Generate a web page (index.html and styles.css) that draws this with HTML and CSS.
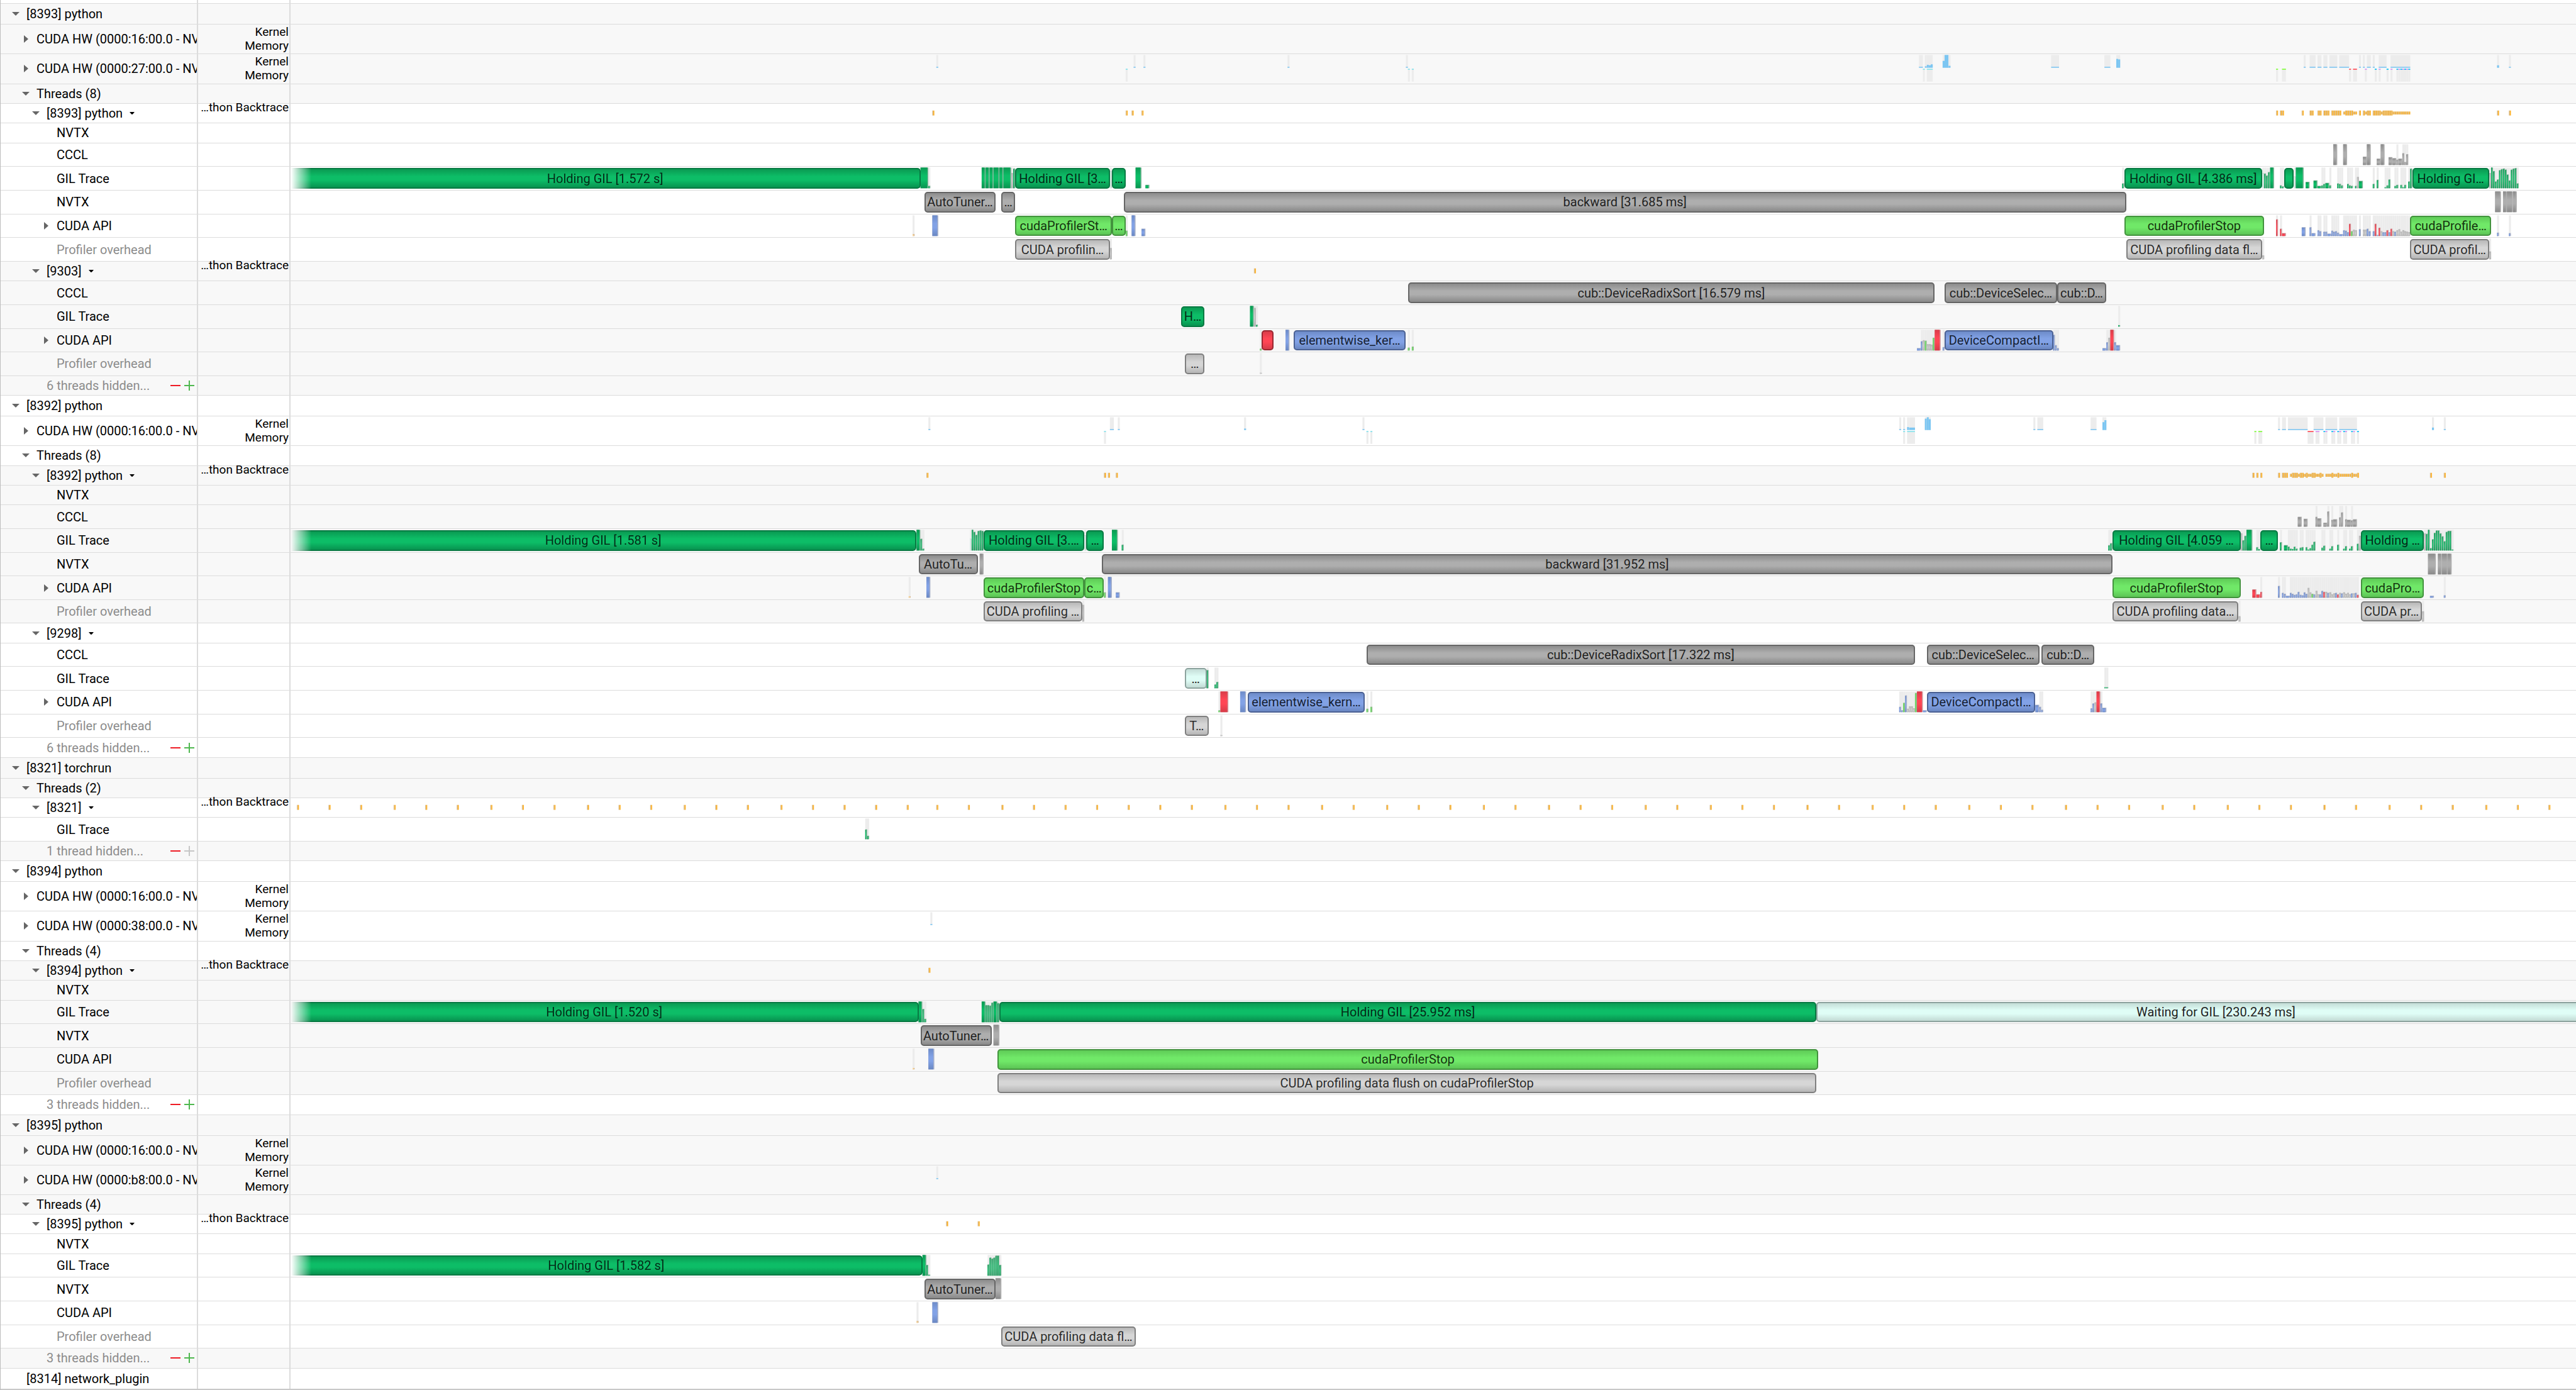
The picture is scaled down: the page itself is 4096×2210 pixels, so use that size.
FILE: index.html
```html
<!DOCTYPE html>
<html lang="en">
<head>
<meta charset="utf-8">
<title>Timeline</title>
<link rel="stylesheet" href="styles.css">
</head>
<body>
<svg class="defs" width="0" height="0" aria-hidden="true">
  <defs>
    <linearGradient id="fill-g" x2="0" y2="1"><stop offset="0" stop-color="#0a9a52"/><stop offset=".4" stop-color="#0dbd67"/><stop offset=".6" stop-color="#0dbd67"/><stop offset="1" stop-color="#089350"/></linearGradient>
    <linearGradient id="fill-k" x2="0" y2="1"><stop offset="0" stop-color="#8c8c8c"/><stop offset=".4" stop-color="#aeaeae"/><stop offset=".6" stop-color="#aeaeae"/><stop offset="1" stop-color="#898989"/></linearGradient>
    <linearGradient id="fill-l" x2="0" y2="1"><stop offset="0" stop-color="#bababa"/><stop offset=".5" stop-color="#d2d2d2"/><stop offset="1" stop-color="#b4b4b4"/></linearGradient>
    <linearGradient id="fill-b" x2="0" y2="1"><stop offset="0" stop-color="#6d8bc8"/><stop offset=".4" stop-color="#82a2e6"/><stop offset=".6" stop-color="#82a2e6"/><stop offset="1" stop-color="#6a87c2"/></linearGradient>
    <linearGradient id="fill-r" x2="0" y2="1"><stop offset="0" stop-color="#d93c49"/><stop offset=".4" stop-color="#ff4655"/><stop offset=".6" stop-color="#ff4655"/><stop offset="1" stop-color="#d63b48"/></linearGradient>
    <symbol id="open" viewBox="0 0 12 12"><path d="M0 3h12L6 9z"/></symbol>
    <symbol id="closed" viewBox="0 0 12 12"><path d="M3 0v12l7-6z"/></symbol>
    <symbol id="caret" viewBox="0 0 8 4"><path d="M0 0h8L5 3.5Q4 4.4 3 3.5z"/></symbol>
    <symbol id="minus" viewBox="0 0 16 16"><path d="M0 7h16v2H0z"/></symbol>
    <symbol id="plus" viewBox="0 0 16 16"><path d="M0 7h7V0h2v7h7v2H9v7H7V9H0z"/></symbol>
  </defs>
</svg>
<main class="timeline">
  <div class="spacer"></div>

  <div class="row head shade"><div class="name l0"><button class="toggle" aria-label="Collapse"><svg><use href="#open"/></svg></button>[8393] python</div><div class="axis"></div><div class="lane"></div></div>
  <div class="row hw shade"><div class="name l1"><button class="toggle" aria-label="Expand"><svg><use href="#closed"/></svg></button>CUDA HW (0000:16:00.0 - NVIDIA</div><div class="axis"><span>Kernel</span><span>Memory</span></div><div class="lane"></div></div>
  <div class="row hw shade"><div class="name l1"><button class="toggle" aria-label="Expand"><svg><use href="#closed"/></svg></button>CUDA HW (0000:27:00.0 - NVIDIA</div><div class="axis"><span>Kernel</span><span>Memory</span></div><div class="lane" data-lane="8393-hw"></div></div>
  <div class="row slim shade"><div class="name l1"><button class="toggle" aria-label="Collapse"><svg><use href="#open"/></svg></button>Threads (8)</div><div class="axis"></div><div class="lane"></div></div>
  <div class="row slim"><div class="name l2"><button class="toggle" aria-label="Collapse"><svg><use href="#open"/></svg></button>[8393] python<button class="menu" aria-label="Thread menu"><svg><use href="#caret"/></svg></button></div><div class="axis raised"><span>…thon Backtrace</span></div><div class="lane" data-lane="8393-marks"></div></div>
  <div class="row slim"><div class="name l3">NVTX</div><div class="axis"></div><div class="lane"></div></div>
  <div class="row"><div class="name l3">CCCL</div><div class="axis"></div><div class="lane" data-lane="8393-cccl"></div></div>
  <div class="row"><div class="name l3">GIL Trace</div><div class="axis"></div><div class="lane" data-lane="8393-gil"></div></div>
  <div class="row"><div class="name l3">NVTX</div><div class="axis"></div><div class="lane" data-lane="8393-nvtx"></div></div>
  <div class="row"><div class="name l3"><button class="toggle" aria-label="Expand"><svg><use href="#closed"/></svg></button>CUDA API</div><div class="axis"></div><div class="lane" data-lane="8393-api"></div></div>
  <div class="row"><div class="name l3 dim">Profiler overhead</div><div class="axis"></div><div class="lane" data-lane="8393-prof"></div></div>
  <div class="row slim shade"><div class="name l2"><button class="toggle" aria-label="Collapse"><svg><use href="#open"/></svg></button>[9303]<button class="menu" aria-label="Thread menu"><svg><use href="#caret"/></svg></button></div><div class="axis raised"><span>…thon Backtrace</span></div><div class="lane" data-lane="9303-marks"></div></div>
  <div class="row shade"><div class="name l3">CCCL</div><div class="axis"></div><div class="lane" data-lane="9303-cccl"></div></div>
  <div class="row shade"><div class="name l3">GIL Trace</div><div class="axis"></div><div class="lane" data-lane="9303-gil"></div></div>
  <div class="row shade"><div class="name l3"><button class="toggle" aria-label="Expand"><svg><use href="#closed"/></svg></button>CUDA API</div><div class="axis"></div><div class="lane" data-lane="9303-api"></div></div>
  <div class="row shade"><div class="name l3 dim">Profiler overhead</div><div class="axis"></div><div class="lane" data-lane="9303-prof"></div></div>
  <div class="row slim shade"><div class="name l2 dim">6 threads hidden...<span class="counts"><button class="less" aria-label="Show fewer"><svg><use href="#minus"/></svg></button><button class="more" aria-label="Show more"><svg><use href="#plus"/></svg></button></span></div><div class="axis"></div><div class="lane"></div></div>

  <div class="row head"><div class="name l0"><button class="toggle" aria-label="Collapse"><svg><use href="#open"/></svg></button>[8392] python</div><div class="axis"></div><div class="lane"></div></div>
  <div class="row hw"><div class="name l1"><button class="toggle" aria-label="Expand"><svg><use href="#closed"/></svg></button>CUDA HW (0000:16:00.0 - NVIDIA</div><div class="axis"><span>Kernel</span><span>Memory</span></div><div class="lane" data-lane="8392-hw"></div></div>
  <div class="row slim"><div class="name l1"><button class="toggle" aria-label="Collapse"><svg><use href="#open"/></svg></button>Threads (8)</div><div class="axis"></div><div class="lane"></div></div>
  <div class="row slim shade"><div class="name l2"><button class="toggle" aria-label="Collapse"><svg><use href="#open"/></svg></button>[8392] python<button class="menu" aria-label="Thread menu"><svg><use href="#caret"/></svg></button></div><div class="axis raised"><span>…thon Backtrace</span></div><div class="lane" data-lane="8392-marks"></div></div>
  <div class="row slim shade"><div class="name l3">NVTX</div><div class="axis"></div><div class="lane"></div></div>
  <div class="row shade"><div class="name l3">CCCL</div><div class="axis"></div><div class="lane" data-lane="8392-cccl"></div></div>
  <div class="row shade"><div class="name l3">GIL Trace</div><div class="axis"></div><div class="lane" data-lane="8392-gil"></div></div>
  <div class="row shade"><div class="name l3">NVTX</div><div class="axis"></div><div class="lane" data-lane="8392-nvtx"></div></div>
  <div class="row shade"><div class="name l3"><button class="toggle" aria-label="Expand"><svg><use href="#closed"/></svg></button>CUDA API</div><div class="axis"></div><div class="lane" data-lane="8392-api"></div></div>
  <div class="row shade"><div class="name l3 dim">Profiler overhead</div><div class="axis"></div><div class="lane" data-lane="8392-prof"></div></div>
  <div class="row slim"><div class="name l2"><button class="toggle" aria-label="Collapse"><svg><use href="#open"/></svg></button>[9298]<button class="menu" aria-label="Thread menu"><svg><use href="#caret"/></svg></button></div><div class="axis"></div><div class="lane"></div></div>
  <div class="row"><div class="name l3">CCCL</div><div class="axis"></div><div class="lane" data-lane="9298-cccl"></div></div>
  <div class="row"><div class="name l3">GIL Trace</div><div class="axis"></div><div class="lane" data-lane="9298-gil"></div></div>
  <div class="row"><div class="name l3"><button class="toggle" aria-label="Expand"><svg><use href="#closed"/></svg></button>CUDA API</div><div class="axis"></div><div class="lane" data-lane="9298-api"></div></div>
  <div class="row"><div class="name l3 dim">Profiler overhead</div><div class="axis"></div><div class="lane" data-lane="9298-prof"></div></div>
  <div class="row slim"><div class="name l2 dim">6 threads hidden...<span class="counts"><button class="less" aria-label="Show fewer"><svg><use href="#minus"/></svg></button><button class="more" aria-label="Show more"><svg><use href="#plus"/></svg></button></span></div><div class="axis"></div><div class="lane"></div></div>

  <div class="row head shade"><div class="name l0"><button class="toggle" aria-label="Collapse"><svg><use href="#open"/></svg></button>[8321] torchrun</div><div class="axis"></div><div class="lane"></div></div>
  <div class="row slim shade"><div class="name l1"><button class="toggle" aria-label="Collapse"><svg><use href="#open"/></svg></button>Threads (2)</div><div class="axis"></div><div class="lane"></div></div>
  <div class="row slim"><div class="name l2"><button class="toggle" aria-label="Collapse"><svg><use href="#open"/></svg></button>[8321]<button class="menu" aria-label="Thread menu"><svg><use href="#caret"/></svg></button></div><div class="axis raised"><span>…thon Backtrace</span></div><div class="lane" data-lane="8321-marks"></div></div>
  <div class="row"><div class="name l3">GIL Trace</div><div class="axis"></div><div class="lane" data-lane="8321-gil"></div></div>
  <div class="row slim shade"><div class="name l2 dim">1 thread hidden...<span class="counts"><button class="less" aria-label="Show fewer"><svg><use href="#minus"/></svg></button><button class="more" aria-label="Show more" disabled><svg><use href="#plus"/></svg></button></span></div><div class="axis"></div><div class="lane"></div></div>

  <div class="row head"><div class="name l0"><button class="toggle" aria-label="Collapse"><svg><use href="#open"/></svg></button>[8394] python</div><div class="axis"></div><div class="lane"></div></div>
  <div class="row hw"><div class="name l1"><button class="toggle" aria-label="Expand"><svg><use href="#closed"/></svg></button>CUDA HW (0000:16:00.0 - NVIDIA</div><div class="axis"><span>Kernel</span><span>Memory</span></div><div class="lane"></div></div>
  <div class="row hw"><div class="name l1"><button class="toggle" aria-label="Expand"><svg><use href="#closed"/></svg></button>CUDA HW (0000:38:00.0 - NVIDIA</div><div class="axis"><span>Kernel</span><span>Memory</span></div><div class="lane" data-lane="8394-hw"></div></div>
  <div class="row slim"><div class="name l1"><button class="toggle" aria-label="Collapse"><svg><use href="#open"/></svg></button>Threads (4)</div><div class="axis"></div><div class="lane"></div></div>
  <div class="row slim shade"><div class="name l2"><button class="toggle" aria-label="Collapse"><svg><use href="#open"/></svg></button>[8394] python<button class="menu" aria-label="Thread menu"><svg><use href="#caret"/></svg></button></div><div class="axis raised"><span>…thon Backtrace</span></div><div class="lane" data-lane="8394-marks"></div></div>
  <div class="row slim shade"><div class="name l3">NVTX</div><div class="axis"></div><div class="lane"></div></div>
  <div class="row shade"><div class="name l3">GIL Trace</div><div class="axis"></div><div class="lane" data-lane="8394-gil"></div></div>
  <div class="row shade"><div class="name l3">NVTX</div><div class="axis"></div><div class="lane" data-lane="8394-nvtx"></div></div>
  <div class="row shade"><div class="name l3">CUDA API</div><div class="axis"></div><div class="lane" data-lane="8394-api"></div></div>
  <div class="row shade"><div class="name l3 dim">Profiler overhead</div><div class="axis"></div><div class="lane" data-lane="8394-prof"></div></div>
  <div class="row slim"><div class="name l2 dim">3 threads hidden...<span class="counts"><button class="less" aria-label="Show fewer"><svg><use href="#minus"/></svg></button><button class="more" aria-label="Show more"><svg><use href="#plus"/></svg></button></span></div><div class="axis"></div><div class="lane"></div></div>

  <div class="row head shade"><div class="name l0"><button class="toggle" aria-label="Collapse"><svg><use href="#open"/></svg></button>[8395] python</div><div class="axis"></div><div class="lane"></div></div>
  <div class="row hw shade"><div class="name l1"><button class="toggle" aria-label="Expand"><svg><use href="#closed"/></svg></button>CUDA HW (0000:16:00.0 - NVIDIA</div><div class="axis"><span>Kernel</span><span>Memory</span></div><div class="lane"></div></div>
  <div class="row hw shade"><div class="name l1"><button class="toggle" aria-label="Expand"><svg><use href="#closed"/></svg></button>CUDA HW (0000:b8:00.0 - NVIDIA</div><div class="axis"><span>Kernel</span><span>Memory</span></div><div class="lane" data-lane="8395-hw"></div></div>
  <div class="row slim shade"><div class="name l1"><button class="toggle" aria-label="Collapse"><svg><use href="#open"/></svg></button>Threads (4)</div><div class="axis"></div><div class="lane"></div></div>
  <div class="row slim"><div class="name l2"><button class="toggle" aria-label="Collapse"><svg><use href="#open"/></svg></button>[8395] python<button class="menu" aria-label="Thread menu"><svg><use href="#caret"/></svg></button></div><div class="axis raised"><span>…thon Backtrace</span></div><div class="lane" data-lane="8395-marks"></div></div>
  <div class="row slim"><div class="name l3">NVTX</div><div class="axis"></div><div class="lane"></div></div>
  <div class="row"><div class="name l3">GIL Trace</div><div class="axis"></div><div class="lane" data-lane="8395-gil"></div></div>
  <div class="row"><div class="name l3">NVTX</div><div class="axis"></div><div class="lane" data-lane="8395-nvtx"></div></div>
  <div class="row"><div class="name l3">CUDA API</div><div class="axis"></div><div class="lane" data-lane="8395-api"></div></div>
  <div class="row"><div class="name l3 dim">Profiler overhead</div><div class="axis"></div><div class="lane" data-lane="8395-prof"></div></div>
  <div class="row slim shade"><div class="name l2 dim">3 threads hidden...<span class="counts"><button class="less" aria-label="Show fewer"><svg><use href="#minus"/></svg></button><button class="more" aria-label="Show more"><svg><use href="#plus"/></svg></button></span></div><div class="axis"></div><div class="lane"></div></div>

  <div class="row head"><div class="name l0">[8314] network_plugin</div><div class="axis"></div><div class="lane"></div></div>
  <div class="edge"></div>
</main>
<script src="script.js"></script>
</body>
</html>
```
FILE: styles.css
```css
* { box-sizing: border-box; }

body {
  margin: 0;
  background: #fff;
  color: #000;
  font: 20px/24px Roboto, "Liberation Sans", sans-serif;
}

.defs { position: absolute; }

.timeline {
  display: flex;
  flex-direction: column;
  min-height: 100vh;
  border-left: 1px solid #bdbdbd;
  overflow: hidden;
}

/* Row heights share the window in proportion to these weights. */
.spacer,
.row {
  display: grid;
  grid-template-columns: 314px 147px minmax(0, 1fr);
  flex: 48 0 0px;
}
.spacer { flex-grow: 7; background: linear-gradient(to right, transparent 312px, #dcdcdc 312px 314px, transparent 314px 459px, #dcdcdc 459px 461px, transparent 461px); }
.row { box-shadow: inset 0 1px #dcdcdc; }
.row.head { flex-grow: 42; }
.row.hw { flex-grow: 60; }
.row.slim { flex-grow: 40; }
.row.shade { background: #f8f8f8; }
.edge { flex: 3 0 0px; background: #c8c8c8; }

.name {
  display: flex;
  align-items: center;
  padding-top: 1px;
  overflow: hidden;
  white-space: nowrap;
  border-right: 2px solid #dcdcdc;
}
.l0 { padding-left: 41px; }
.l1 { padding-left: 57px; }
.l2 { padding-left: 73px; }
.l3 { padding-left: 89px; }
.dim { color: #8c8c8c; }

.axis {
  display: flex;
  flex-direction: column;
  justify-content: center;
  align-items: flex-end;
  padding-top: 1px;
  padding-right: 1px;
  border-right: 2px solid #dcdcdc;
  font-size: 19px;
  line-height: 22px;
  white-space: nowrap;
}
.axis.raised { justify-content: flex-start; }
.axis.raised span { margin-top: -5px; }

button {
  display: flex;
  align-items: center;
  justify-content: center;
  flex: none;
  padding: 0;
  border: 0;
  background: none;
}
.toggle { width: 24px; height: 24px; margin-left: -29px; margin-right: 5px; }
.toggle svg { width: 12px; height: 12px; fill: #666; }
.menu { width: 24px; height: 24px; margin-left: 3px; }
.menu svg { width: 8px; height: 4px; fill: #000; }
.counts { display: flex; gap: 6px; margin-left: auto; margin-right: 4px; }
.counts svg { width: 16px; height: 16px; }
.less { color: #ee1c25; }
.more { color: #4fb84f; }
.more:disabled { color: #c6c6c6; }
.counts svg { fill: currentColor; }

/* Lanes: SVG for the sampled buckets, HTML bars for named ranges. */
.lane { position: relative; overflow: hidden; }
.lane svg { position: absolute; inset: 0; width: 100%; height: 100%; }

.bar {
  position: absolute;
  top: 3px;
  bottom: 2px;
  display: flex;
  align-items: center;
  justify-content: center;
  overflow: hidden;
  white-space: nowrap;
  border: 2px solid;
  border-radius: 5px;
}
.bar span { color: #222; }
.bar.green { background: linear-gradient(#0a9a52, #0dbd67 40%, #0dbd67 60%, #089350); border-color: #087a43; }
.bar.green span { color: #042a17; }
.bar.gray { background: linear-gradient(#8c8c8c, #aeaeae 40%, #aeaeae 60%, #898989); border-color: #666; }
.bar.light { background: linear-gradient(#b8b8b8, #d6d6d6 40%, #d6d6d6 60%, #b5b5b5); border-color: #7f7f7f; }
.bar.light span { color: #2c2c2c; }
.bar.lime { background: linear-gradient(#5fcb57, #70e868 40%, #70e868 60%, #5cc455); border-color: #43933e; }
.bar.lime span { color: #15350f; }
.bar.blue { background: linear-gradient(#6d8bc8, #82a2e6 40%, #82a2e6 60%, #6a87c2); border-color: #4c6294; }
.bar.blue span { color: #161f33; }
.bar.red { background: linear-gradient(#d93c49, #ff4655 40%, #ff4655 60%, #d63b48); border-color: #9a2731; }
.bar.mint { background: linear-gradient(#c4ddd7, #dffdf6 40%, #dffdf6 60%, #c2dad4); border-color: #8da39e; }
.bar.from-before {
  border-left: 0;
  border-top-left-radius: 0;
  border-bottom-left-radius: 0;
  -webkit-mask-image: linear-gradient(to right, transparent, #000 32px);
  mask-image: linear-gradient(to right, transparent, #000 32px);
}
```
FILE: script.js
```js
// Horizontal extent of a lane, in time units.
const START = 589;
const SPAN = 4633;

// Sampled buckets: "start:item item ..."; each item is a colour letter, a height
// and an optional "*n" for n buckets of 4 units.
// Named ranges: [from, to, colour, text].
const LANES = {
  '8393-hw': {
    kernel: '1898:2 2298:2 2318:2 2610:2 2850:2 3890:2*2 3902:3 6 5 7 3938:14 26*2 4 4158:2*4 4266:2*3 4290:18 17 4670:2 4682:2*3 4698:2*2 4710:2*2 4722:2*4 4742:2*5 4782:2 4790:2 4798:2*2 4810:2 4822:2*4 4846:2*10 5062:5 5086:2',
    memory: '2282:a 2854:a 2862:a 3898:a 3906:a*3 4614:g 4626:g*2 4762:r 4770:r*2 4794:v 4814:c 4822:v 4838:c 4846:v 4858:c v c v c v c'
  },
  '8393-marks': { marks: '1890:10 2282:10 2294:10 2314:10 4614:10 4622:10 10 4666:10 4682:10 10 4698:10 10 4710:10 10 10 4726:10 10 10 10 10 4750:6 10 10 10 10 6 6 4782:10 4790:10 6 10 10 4810:10 10 10 10 6 10 10 10 10 10 6 6 6 6 6 6 6 6 6 5062:10 5086:10' },
  '8393-cccl': { chart: '4730:k42*2 4750:k42*2 4790:k17*2 k42*2 4818:k13*2 k42*2 4842:k16*2 k14*2 k11 k13*2 k24 k6 k22' },
  '8393-gil': {
    chart: '1866:g42*4 g5 1990:g42*2 g42*2 g42*2 g42*3 g42*2 g42*4 l31 g40 2250:m35 2302:g42*3 2322:g7*2 4302:g10 4586:m31 g30 g26 g33 g42*2 4622:g6 g4 4650:m24 g42*4 4674:g13*2 4690:g16*2 g5*2 g6 g9 g11*2 g6 4738:g10 g9 g6 4758:g9 g6 g5 4774:g5 l23 g15*2 4810:g9 4818:g17 4834:g2 g6 g18 4854:g5 g7 4866:g7 g2 g7 4882:g14 g40 5046:l31 g42 g35 g14 g18 g37 g39 g40 g38 g28 g16 g38 g40 g41 g10',
    bars: [[590, 1866, 'green from-before', 'Holding GIL [1.572 s]'], [2058, 2250, 'green', 'Holding GIL [3…'], [2254, 2282, 'green', '…'], [4306, 4586, 'green', 'Holding GIL [4.386 ms]'], [4630, 4650, 'green', ''], [4890, 5046, 'green', 'Holding GI…']]
  },
  '8393-nvtx': {
    chart: '5058:k42*3 5074:k42*2 k42*3 k42*2',
    bars: [[1874, 2018, 'gray', 'AutoTuner…'], [2030, 2058, 'gray', '…'], [2278, 4310, 'gray', 'backward [31.685 ms]']]
  },
  '8393-api': {
    chart: '1850:o4 1890:b42*3 2282:G11 2294:b42*2 2314:b15*2 4614:r34 4622:r15 r6*2 4666:b18*2 4682:b18 b6*2 4698:b12 b10 4710:b9 b9 b5*2 4726:b11 b9 b10 b7 b4*2 4750:b12 b11 b8 r25 G10 l13 l12 4782:b14 4790:l13 l13 b15 b10 4810:b10 r25 b2 r17 l10 b8 b8 r12 b8 r15 l10 b9 l12 l14 l9 l12 l10 l9 l8 5062:b7 5086:b6',
    bars: [[2058, 2254, 'lime', 'cudaProfilerSt…'], [2254, 2282, 'lime', '…'], [4306, 4590, 'lime', 'cudaProfilerStop'], [4886, 5050, 'lime', 'cudaProfile…']]
  },
  '8393-prof': {
    chart: '2250:l23 4586:l8 5046:l16',
    bars: [[2058, 2250, 'light', 'CUDA profilin…'], [4310, 4586, 'light', 'CUDA profiling data fl…'], [4886, 5046, 'light', 'CUDA profil…']]
  },
  '9303-marks': { marks: '2542:10' },
  '9303-cccl': { bars: [[2854, 3922, 'gray', 'cub::DeviceRadixSort [16.579 ms]'], [3942, 4170, 'gray', 'cub::DeviceSelec…'], [4170, 4270, 'gray', 'cub::D…']] },
  '9303-gil': { chart: '2534:g42*2 l38 g4 4294:g3', bars: [[2394, 2442, 'green', 'H…']] },
  '9303-api': {
    chart: '2554:G4 2606:b42*2 2854:G6 2862:G8 3886:b5*2 b19 l21 G20 l13 l13 l12 G26 r42*3 3938:b7 4162:b32 b11 b5 4262:b5*2 b17 l26 r42*2 b17 b11*2',
    bars: [[2558, 2582, 'red', ''], [2622, 2850, 'blue', 'elementwise_ker…'], [3942, 4162, 'blue', 'DeviceCompactI…']]
  },
  '9303-prof': { chart: '2554:l2', bars: [[2402, 2442, 'light', '…']] },

  '8392-hw': {
    kernel: '1882:2 2250:2*2 2266:2 2522:3 2762:2 3850:2 3858:2 3866:6 5*3 3902:23 26 22 4122:2 4130:2*3 4238:2*3 4262:16 20 4618:2 4626:2*2 4638:2*10 4690:2*5 4714:2*6 4742:2*9 4930:5 4954:2',
    memory: '2238:a 2770:a 2778:a 3858:a 3866:a*4 4570:g 4578:g*2 4678:r*3 4694:v*2 4710:c v 4726:c v 4738:c v 4750:c v 4766:c v 4778:c'
  },
  '8392-marks': { marks: '1878:10 2238:10 2246:10 2262:10 4566:10 4574:10 4582:10 4618:10 4626:10 10 10 4642:6 10 10 10 6 10 10 6 10 6 6 10 10 6 6 10 6 4714:6 6 6 10 6 6 10 6 6 6 6 6 6 10 6 6 10 4926:10 4954:10' },
  '8392-cccl': { chart: '4658:k20*2 4670:k16*2 4694:k20 k17*2 4710:k8*2 k31 4726:k14 k15*2 4742:k19 k29 4754:k15 k14*2 k13 k15*2' },
  '8392-gil': {
    chart: '1858:g42*2 g24 g4 1966:m24 g42 g38 g32 g40 g41 g40 2198:m31 2254:g42*3 2274:g12 4274:g11 g15 4542:l35 g21 g30 g42*3 4574:g7 g3 4622:g17 4630:g11*2 g8 g4 g3 g8 g4 4662:g6 g7 4674:g7 g2 g5 g12 g18 4706:g6 g10 4722:g4 g9 4738:g12 4750:g4 g9 4762:g4 g9 4778:g14 l30 4914:l35 g34 g42 g5 g23 g36 g41 g41 g35 g29 g19 g38 g40 g40 g2',
    bars: [[590, 1858, 'green from-before', 'Holding GIL [1.581 s]'], [1994, 2198, 'green', 'Holding GIL [3.…'], [2202, 2238, 'green', '…'], [4282, 4542, 'green', 'Holding GIL [4.059 …'], [4582, 4618, 'green', '…'], [4786, 4914, 'green', 'Holding …']]
  },
  '8392-nvtx': {
    chart: '1986:k42*2 4922:k42*4 4942:k42*2 k42*3 k42*2',
    bars: [[1862, 1982, 'gray', 'AutoTu…'], [2234, 4282, 'gray', 'backward [31.952 ms]']]
  },
  '8392-api': {
    chart: '1842:o3 1878:b42*2 2238:G11 2246:b42*2 2262:b11*2 4566:r17*2 r7*2 r12 4618:b24 4626:b10 b8 b4*2 b10 b8 b6 b7 b12 b6 b5 b11 b8 l20 l11 G8 b7 l14 l7 b7 b14 r12 l12 b10 l11 l7 l9 b10 r7 l10 b9 l11 l8 l10 l7 b9 l9 b10 r6 4926:b4*2 4954:b5',
    bars: [[1994, 2198, 'lime', 'cudaProfilerStop'], [2198, 2238, 'lime', 'c…'], [4282, 4542, 'lime', 'cudaProfilerStop'], [4786, 4914, 'lime', 'cudaPro…']]
  },
  '8392-prof': {
    chart: '2194:l34 4538:l11 4910:l21',
    bars: [[1994, 2194, 'light', 'CUDA profiling …'], [4282, 4538, 'light', 'CUDA profiling data…'], [4786, 4910, 'light', 'CUDA pr…']]
  },
  '9298-cccl': { bars: [[2770, 3882, 'gray', 'cub::DeviceRadixSort [17.322 ms]'], [3906, 4134, 'gray', 'cub::DeviceSelec…'], [4138, 4246, 'gray', 'cub::D…']] },
  '9298-gil': { chart: '2446:g37 2462:g8 g13 4266:g2 g2', bars: [[2402, 2446, 'mint', '…']] },
  '9298-api': {
    chart: '2470:G4 r42*4 2514:b42*3 2770:G7 2778:G11 3850:b11 b4 G19 b34 l7 l12 l12 l8 G39 r42*3 b4*2 4126:b15*2 b11 b5 4238:b8 b18 l20 r42*2 b18 b9*2',
    bars: [[2530, 2766, 'blue', 'elementwise_kern…'], [3906, 4126, 'blue', 'DeviceCompactI…']]
  },
  '9298-prof': { chart: '2474:l2', bars: [[2402, 2450, 'light', 'T…']] },

  '8321-marks': { marks: '602:10 666:10 730:10 798:10 862:10 926:10 994:10 1058:10 1122:10 1190:10 1254:10 1318:10 1386:10 1450:10 1514:10 1582:10 1646:10 1710:10 1774:10 1838:10 1898:10 1962:10 2030:10 2094:10 2158:10 2222:10 2286:10 2350:10 2414:10 2482:10 2546:10 2610:10 2678:10 2742:10 2810:10 2874:10 2938:10 3006:10 3070:10 3138:10 3202:10 3266:10 3334:10 3398:10 3466:10 3530:10 3594:10 3662:10 3726:10 3794:10 3858:10 3922:10 3990:10 4054:10 4118:10 4186:10 4250:10 4314:10 4382:10 4446:10 4514:10 4578:10 4642:10 4710:10 4774:10 4842:10 4906:10 4970:10 5038:10 5102:10 5166:10' },
  '8321-gil': { chart: '1754:g20 g7' },

  '8394-hw': { kernel: '1886:2' },
  '8394-marks': { marks: '1882:10' },
  '8394-gil': {
    chart: '1862:g42*2 g27 g7 1990:g42*2 g35 g35 g34 g40 g42*2 g39',
    bars: [[590, 1862, 'green from-before', 'Holding GIL [1.520 s]'], [2026, 3682, 'green', 'Holding GIL [25.952 ms]'], [3682, 5302, 'mint', 'Waiting for GIL [230.243 ms]']]
  },
  '8394-nvtx': { chart: '2014:k42*3', bars: [[1866, 2010, 'gray', 'AutoTuner…']] },
  '8394-api': { chart: '1850:o3 1882:b42*3', bars: [[2022, 3686, 'lime', 'cudaProfilerStop']] },
  '8394-prof': { bars: [[2022, 3682, 'light', 'CUDA profiling data flush on cudaProfilerStop']] },

  '8395-hw': { kernel: '1898:2' },
  '8395-marks': { marks: '1918:10 1982:10' },
  '8395-gil': {
    chart: '1870:g42*2 g22 g2 2002:g23 g37 g35 g37 g41 g41 g22',
    bars: [[590, 1870, 'green from-before', 'Holding GIL [1.582 s]']]
  },
  '8395-nvtx': { chart: '2018:k42*3', bars: [[1874, 2018, 'gray', 'AutoTuner…']] },
  '8395-api': { chart: '1858:o4 1890:b42*3' },
  '8395-prof': { bars: [[2030, 2302, 'light', 'CUDA profiling data fl…']] }
};

const FILL = { g: 'url(#fill-g)', k: 'url(#fill-k)', l: 'url(#fill-l)', b: 'url(#fill-b)', r: 'url(#fill-r)', G: '#6ade62', m: '#dcefe9', o: '#ffdca0' };
const SHADE = { g: '#7fb598', k: '#b0b0b0', l: '#b9b9b9', b: '#a6b0ca', r: '#d39297', G: '#92b98e', m: '#c6d4d0', o: '#d8b990' };
const MEMORY = { a: '#80e2ec', g: '#7dff33', r: '#ff4550', v: '#d98cf2', c: '#00c0f6' };
const EMPTY = '#ececec';

const rect = (x, y, w, h, fill) => `<rect x="${x}" y="${y}" width="${w}" height="${h}" fill="${fill}"/>`;

// Calls draw(x, width, value) for every item in a bucket string.
function each(text, draw) {
  let x = 0;
  return text.split(' ').map(token => {
    let item = token;
    if (token.includes(':')) {
      const parts = token.split(':');
      x = Number(parts[0]);
      item = parts[1];
    }
    const [value, count = 1] = item.split('*');
    const width = 4 * count;
    const out = draw(x, width, value);
    x += width;
    return out;
  }).join('');
}

function drawChart(x, w, value) {
  const colour = value[0];
  const h = Number(value.slice(1));
  const y = 45 - h;
  return (w === 4 && h < 42 ? rect(x, 3, w, 42, EMPTY) : '')
    + rect(x, y, w, h, SHADE[colour])
    + rect(x, h < 42 && h > 3 ? y + 1 : y, w - 2, h < 42 && h > 3 ? h - 1 : h, FILL[colour]);
}

const drawMark = (x, w, h) => rect(x, 20 - h / 2, 2, h, '#d8b780') + rect(x + 2, 20 - h / 2, 2, h, '#ffae1c');
const drawKernel = (x, w, h) => rect(x, 3, w, 26, EMPTY) + rect(x, 29 - h, w, h, '#7cc6f2');
const drawMemory = (x, w, c) => rect(x, 31, w, 26, EMPTY) + rect(x, 31, w, 2, MEMORY[c]);

document.querySelectorAll('[data-lane]').forEach(lane => {
  const data = LANES[lane.dataset.lane];
  const height = data.kernel ? 60 : data.marks ? 40 : 48;
  const shapes = (data.chart ? each(data.chart, drawChart) : '')
    + (data.marks ? each(data.marks, drawMark) : '')
    + (data.kernel ? each(data.kernel, drawKernel) : '')
    + (data.memory ? each(data.memory, drawMemory) : '');
  if (shapes) {
    lane.innerHTML = `<svg viewBox="${START} 0 ${SPAN} ${height}" preserveAspectRatio="none">${shapes}</svg>`;
  }
  (data.bars || []).forEach(([from, to, kind, text]) => {
    const bar = document.createElement('div');
    bar.className = 'bar ' + kind;
    bar.style.left = (from - START) / SPAN * 100 + '%';
    bar.style.width = (to - from) / SPAN * 100 + '%';
    if (text) {
      const label = document.createElement('span');
      label.textContent = text;
      bar.append(label);
    }
    lane.append(bar);
  });
});
```
